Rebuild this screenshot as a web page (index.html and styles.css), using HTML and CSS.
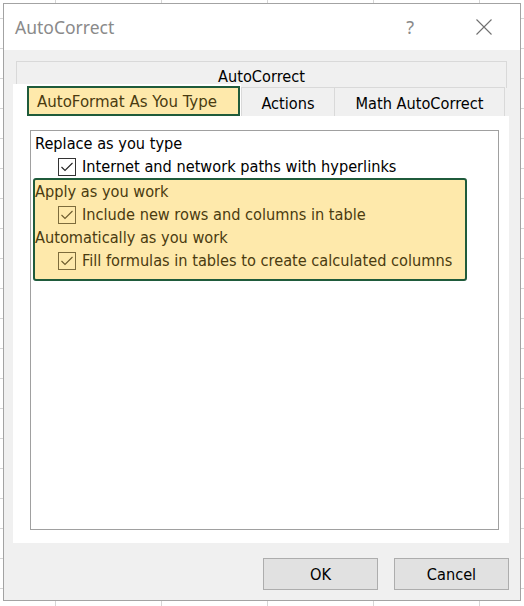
FILE: index.html
```html
<!DOCTYPE html>
<html lang="en">
<head>
    <meta charset="UTF-8">
    <meta name="viewport" content="width=device-width, initial-scale=1.0">
    <title>AutoCorrect</title>
    <link rel="stylesheet" href="styles.css">
</head>
<body>
    <div class="dialog">
        <div class="titlebar">
            <span class="title">AutoCorrect</span>
            <span class="help">?</span>
            <svg class="close" width="16" height="16" viewBox="0 0 16 16">
                <path d="M0.5 0.5 L15.5 15.5 M15.5 0.5 L0.5 15.5" stroke="#707070" stroke-width="1.1" fill="none"/>
            </svg>
        </div>

        <div class="content">
            <div class="tab-back">AutoCorrect</div>
            <div class="tab-row">
                <div class="tab selected"><span class="mark tab-mark">AutoFormat As You Type</span></div>
                <div class="tab actions">Actions</div>
                <div class="tab math">Math AutoCorrect</div>
            </div>

            <div class="panel">
                <div class="group">
                    <div class="line">Replace as you type</div>
                    <div class="check">
                        <span class="box"><svg width="16" height="16" viewBox="0 0 16 16"><path d="M2.5 8 L6 11.5 L13.5 4" stroke="currentColor" stroke-width="1.1" fill="none"/></svg></span>
                        Internet and network paths with hyperlinks
                    </div>

                    <!-- highlighted block -->
                    <div class="mark group-mark">
                        <div class="line">Apply as you work</div>
                        <div class="check">
                            <span class="box"><svg width="16" height="16" viewBox="0 0 16 16"><path d="M2.5 8 L6 11.5 L13.5 4" stroke="currentColor" stroke-width="1.1" fill="none"/></svg></span>
                            Include new rows and columns in table
                        </div>
                        <div class="line">Automatically as you work</div>
                        <div class="check">
                            <span class="box"><svg width="16" height="16" viewBox="0 0 16 16"><path d="M2.5 8 L6 11.5 L13.5 4" stroke="currentColor" stroke-width="1.1" fill="none"/></svg></span>
                            Fill formulas in tables to create calculated columns
                        </div>
                    </div>
                </div>
            </div>

            <div class="buttons">
                <button>OK</button>
                <button>Cancel</button>
            </div>
        </div>
    </div>
</body>
</html>
```

FILE: styles.css
```css
html, body {
    height: 100%;
}

body {
    margin: 0;
    font-family: "DejaVu Sans Condensed", "DejaVu Sans", sans-serif;
    font-size: 16.2px;
    color: #000;
    background-color: #fff;
    background-image:
        linear-gradient(to right, #d6d6d6 1px, transparent 1px),
        linear-gradient(to bottom, #d6d6d6 1px, transparent 1px);
    background-size: 106px 100%, 100% 30px;
    background-position: 55px 0, 0 18px;
}

.dialog {
    margin: 3px 0 0 3px;
    width: 518px;
    height: 598px;
    box-sizing: border-box;
    border: 1px solid #a3a3a3;
    background: #f0f0f0;
    display: flex;
    flex-direction: column;
}

.titlebar {
    height: 46px;
    background: #fff;
    display: flex;
    align-items: center;
    padding-left: 11px;
}

.title {
    font-family: "Noto Sans", sans-serif;
    font-size: 17.5px;
    color: #8a8a8a;
}

.help {
    margin-left: auto;
    margin-right: 62px;
    font-family: "Noto Sans", sans-serif;
    font-size: 18px;
    color: #8a8a8a;
}

.close {
    margin-right: 28px;
}

.content {
    flex: 1;
    padding: 11px 11px 10px 9px;
    display: flex;
    flex-direction: column;
}

.tab-back {
    margin: 0 2px 0 3px;
    height: 27px;
    box-sizing: border-box;
    border: 1px solid #d9d9d9;
    border-bottom: none;
    text-align: center;
    line-height: 29px;
}

.tab-row {
    position: relative;
    display: flex;
    align-items: flex-end;
    margin-top: -4px;
}

.tab {
    height: 29px;
    box-sizing: border-box;
    border: 1px solid #d9d9d9;
    border-bottom: none;
    background: #f0f0f0;
    text-align: center;
    line-height: 31px;
}

.tab.selected {
    width: 228px;
    height: 32px;
    border: none;
    background: #fff;
    padding: 2px 1px 0 14px;
    display: flex;
}

.actions {
    width: 94px;
}

.math {
    width: 170px;
    border-left: none;
}

.mark {
    background: #fee9ab;
    border: 2px solid #1f5b3b;
    color: #4a3b10;
}

.tab-mark {
    flex: 1;
    box-sizing: border-box;
    padding-left: 8px;
    text-align: left;
    font-size: 16.7px;
    line-height: 27px;
}

.panel {
    height: 427px;
    box-sizing: border-box;
    background: #fff;
    padding: 14px 10px 13px 17px;
}

.group {
    height: 100%;
    box-sizing: border-box;
    border: 1px solid #a0a0a0;
    padding: 1px 0 0 4px;
    line-height: 23.3px;
}

.check {
    display: flex;
    align-items: center;
    padding-left: 23px;
}

.box {
    width: 18px;
    height: 18px;
    box-sizing: border-box;
    border: 1px solid #333;
    margin-right: 6px;
    display: flex;
    align-items: center;
    justify-content: center;
    color: #222;
}

.group-mark {
    margin: -1px 0 0 -2px;
    width: 434px;
    box-sizing: border-box;
    border-radius: 3px;
    padding-bottom: 6px;
}

.group-mark .box {
    border-color: #7d6c3c;
    color: #6b5a2c;
}

.buttons {
    display: flex;
    justify-content: flex-end;
    gap: 16px;
    margin-top: 15px;
}

button {
    width: 115px;
    height: 32px;
    background: #e1e1e1;
    border: 1px solid #adadad;
    font-family: "DejaVu Sans Condensed", "DejaVu Sans", sans-serif;
    font-size: 16.2px;
    color: #000;
}
```
